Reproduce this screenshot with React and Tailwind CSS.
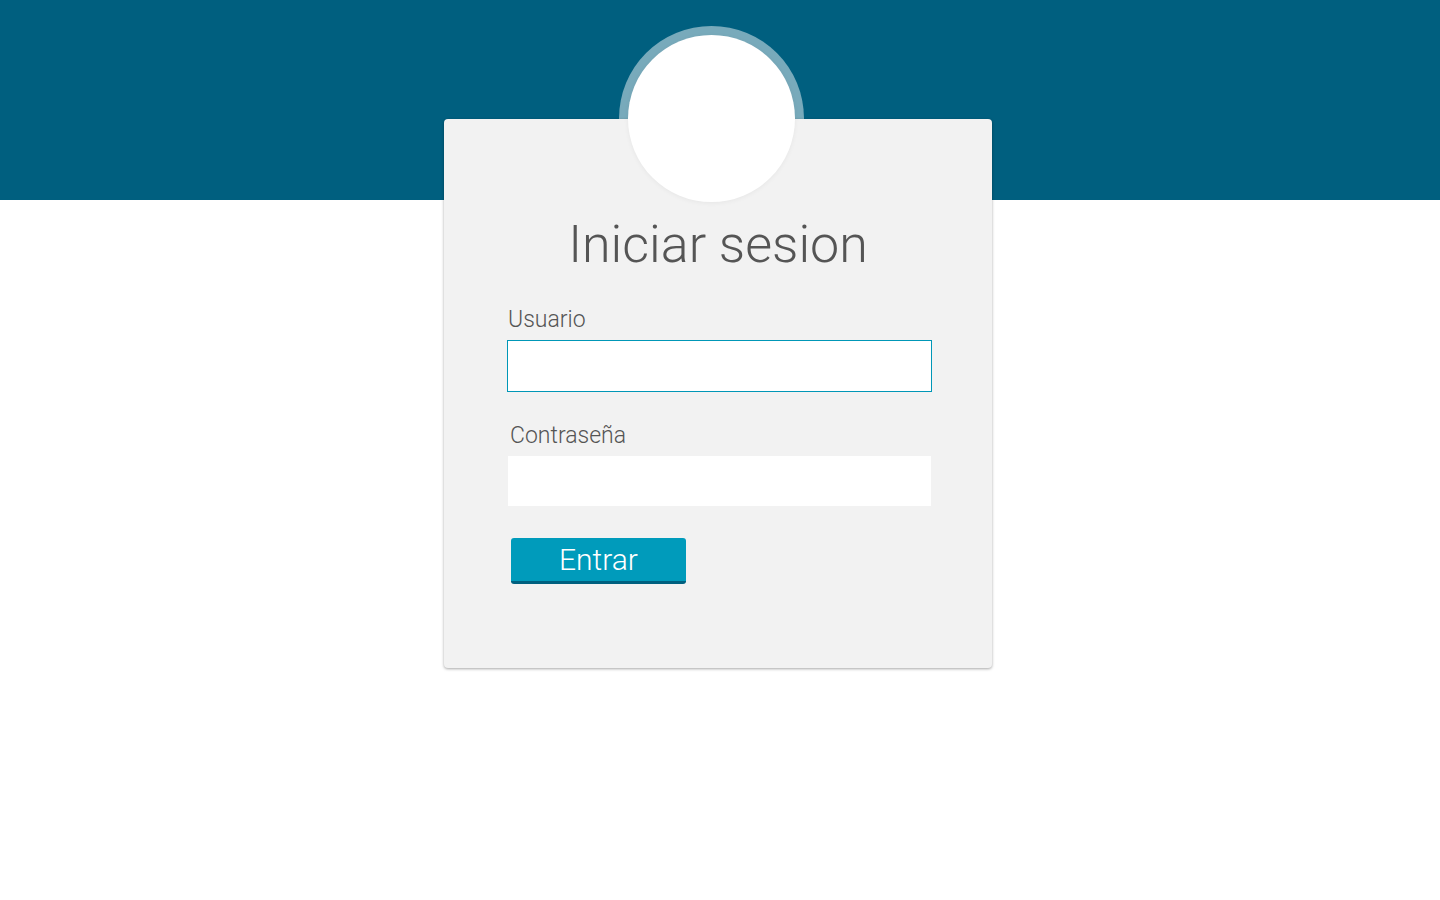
export default function App() {
  return (
    <div
      className="min-h-[900px] bg-white"
      style={{ fontFamily: "Roboto, 'Liberation Sans', sans-serif" }}
    >
      <div className="h-[200px] bg-[#005f7f]"></div>
      <div className="flex justify-center">
        <div className="relative -mt-[81px] ml-[-4px] w-[548px]">
          {/* ring sits behind the card so it only shows over the header */}
          <div className="absolute left-[175px] top-[-93px] w-[185px] h-[185px] rounded-full bg-[rgba(255,255,255,0.47)]"></div>
          <div className="relative h-[549px] rounded-[4px] bg-[#f2f2f2] shadow-[0_1px_3px_rgba(0,0,0,0.35)]">
            <div className="absolute left-[184px] top-[-84px] w-[167px] h-[167px] rounded-full bg-white shadow-[0_1px_5px_rgba(0,0,0,0.05)]"></div>
            <div className="flex flex-col pl-[64px] pt-[100px]">
              <h1 className="text-center ml-[-64px] text-[52px] leading-[52px] font-light text-[#555]">
                Iniciar sesion
              </h1>
              <label className="mt-[37px] text-[23px] leading-[23px] font-light text-[#555]">
                Usuario
              </label>
              <input
                type="text"
                className="mt-[9px] ml-[-1px] w-[425px] h-[52px] bg-white border border-[#0097b7] outline-none px-3 text-lg"
              />
              <label className="mt-[32px] ml-[2px] text-[23px] leading-[23px] font-light text-[#555]">
                Contraseña
              </label>
              <input
                type="password"
                className="mt-[9px] w-[423px] h-[50px] bg-white outline-none px-3 text-lg"
              />
              <button className="mt-[32px] ml-[3px] w-[175px] h-[46px] rounded-[3px] bg-[#009bbb] border-b-[3px] border-[#00607f] text-white text-[30px] leading-[30px] font-light">
                Entrar
              </button>
            </div>
          </div>
        </div>
      </div>
    </div>
  );
}
